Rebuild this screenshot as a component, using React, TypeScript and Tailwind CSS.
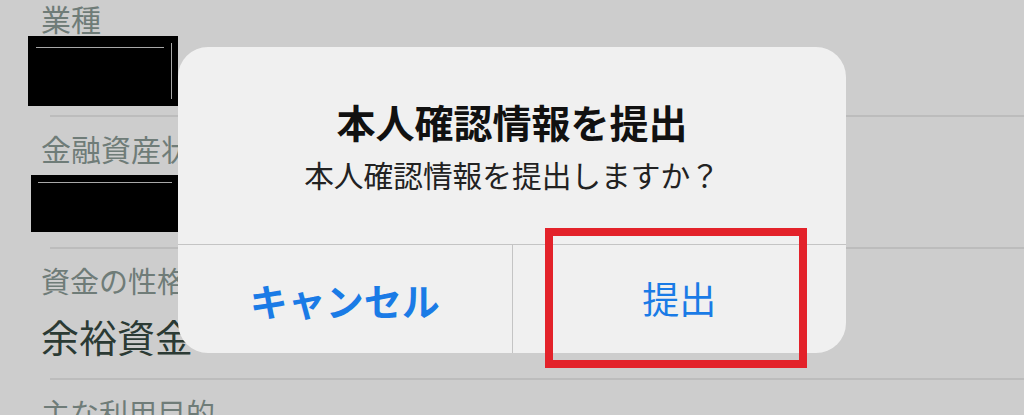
const jp = { fontFamily: '"Noto Sans CJK JP", "Noto Sans", sans-serif' };

function Divider() {
  return <div className="ml-[50px] h-[2px] bg-[#bcbcbc]" />;
}

export default function App() {
  return (
    <div className="relative w-[1024px] h-[415px] overflow-hidden bg-[#cdcdcd]" style={jp}>
      {/* Background form list */}
      <div className="flex flex-col">
        {/* 業種 */}
        <div className="h-[115px] pl-[41px] pt-[3px]">
          <div className="text-[30px] leading-[30px] text-[#6f7c78]">業種</div>
          <div className="relative -ml-[13px] mt-[3px] h-[70px] w-[150px] bg-black">
            <div className="absolute left-[8px] top-[11px] h-px w-[128px] bg-[#a8a8a8]" />
            <div className="absolute left-[143px] top-[7px] h-[56px] w-px bg-[#a8a8a8]" />
          </div>
        </div>
        <Divider />

        {/* 金融資産状況 */}
        <div className="h-[130px] pl-[41px] pt-[16px]">
          <div className="text-[30px] leading-[30px] text-[#6f7c78] whitespace-nowrap">金融資産状況</div>
          <div className="relative -ml-[10px] mt-[12px] h-[57px] w-[170px] bg-black">
            <div className="absolute left-[7px] top-[7px] h-px w-[134px] bg-[#a8a8a8]" />
          </div>
        </div>
        <Divider />

        {/* 資金の性格 */}
        <div className="h-[129px] pl-[41px] pt-[17px]">
          <div className="text-[29px] leading-[29px] text-[#6f7c78] whitespace-nowrap">資金の性格</div>
          <div className="mt-[22px] text-[38px] leading-[38px] text-[#2b3a34] whitespace-nowrap">余裕資金</div>
        </div>
        <Divider />

        {/* 主な利用目的 */}
        <div className="pl-[41px] pt-[18px]">
          <div className="text-[29px] leading-[29px] text-[#6f7c78] whitespace-nowrap">主な利用目的</div>
        </div>
      </div>

      {/* Alert dialog */}
      <div className="absolute left-[178px] top-[47px] flex h-[306px] w-[668px] flex-col overflow-hidden rounded-[30px] bg-[#f0f0f0]">
        <div className="flex h-[197px] flex-col items-center pt-[54px]">
          <div className="text-[39px] font-bold leading-[40px] text-[#111]">本人確認情報を提出</div>
          <div className="mt-[19px] text-[29.7px] leading-[30px] text-[#222]">本人確認情報を提出しますか？</div>
        </div>
        <div className="h-px bg-[#c4c4c4]" />
        <div className="flex flex-1">
          <div className="flex flex-1 items-center justify-center text-[38px] font-bold text-[#1a7be6]">
            キャンセル
          </div>
          <div className="w-px bg-[#c4c4c4]" />
          <div className="flex flex-1 items-center justify-center text-[37px] text-[#1a7be6]">
            提出
          </div>
        </div>
      </div>

      {/* Red highlight */}
      <div className="absolute left-[545px] top-[228px] h-[140px] w-[262px] border-[8px] border-[#e3222a]" />
    </div>
  );
}
